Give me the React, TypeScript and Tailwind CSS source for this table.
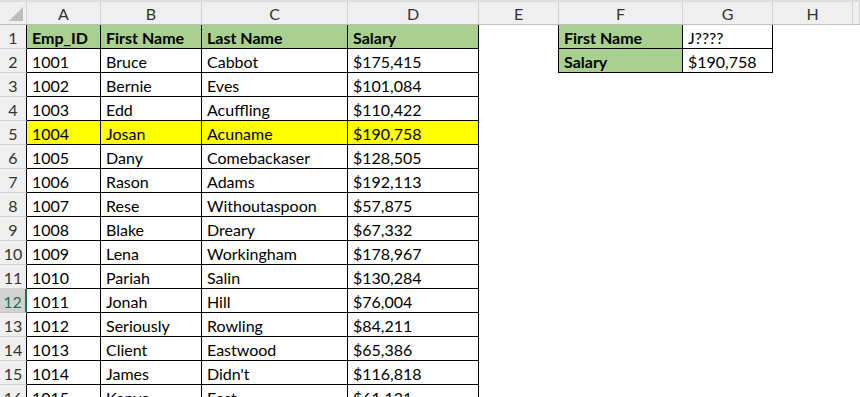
import React from 'react';

const cols = ['A', 'B', 'C', 'D', 'E', 'F', 'G', 'H', ''];

const employees: [string, string, string, string][] = [
  ['1001', 'Bruce', 'Cabbot', '$175,415'],
  ['1002', 'Bernie', 'Eves', '$101,084'],
  ['1003', 'Edd', 'Acuffling', '$110,422'],
  ['1004', 'Josan', 'Acuname', '$190,758'],
  ['1005', 'Dany', 'Comebackaser', '$128,505'],
  ['1006', 'Rason', 'Adams', '$192,113'],
  ['1007', 'Rese', 'Withoutaspoon', '$57,875'],
  ['1008', 'Blake', 'Dreary', '$67,332'],
  ['1009', 'Lena', 'Workingham', '$178,967'],
  ['1010', 'Pariah', 'Salin', '$130,284'],
  ['1011', 'Jonah', 'Hill', '$76,004'],
  ['1012', 'Seriously', 'Rowling', '$84,211'],
  ['1013', 'Client', 'Eastwood', '$65,386'],
  ['1014', 'James', "Didn't", '$116,818'],
  ['1015', 'Kanye', 'East', '$61,131'],
];

const lookup: [string, string][] = [
  ['First Name', 'J????'],
  ['Salary', '$190,758'],
];

const cell = 'flex items-center pt-[3px] px-[5px] whitespace-nowrap overflow-hidden';

export default function App() {
  const rows = [['Emp_ID', 'First Name', 'Last Name', 'Salary'], ...employees];

  return (
    <div
      className="w-[860px] h-[397px] overflow-hidden bg-white text-[16px] text-black"
      style={{ fontFamily: 'Lato, "Open Sans", sans-serif' }}
    >
      <div className="grid grid-cols-[27px_74px_101px_146px_131px_80px_124px_90px_80px_1fr] grid-rows-[25px_repeat(16,24px)]">
        {/* corner */}
        <div className="relative bg-[#efefef] border-t-2 border-t-[#dcdcdc] border-r border-r-[#d4d4d4] border-b border-b-[#bdbdbd]">
          <div className="absolute right-[3px] bottom-[3px] w-0 h-0 border-l-[14px] border-l-transparent border-b-[14px] border-b-[#bdbdbd]" />
        </div>
        {cols.map((c, i) => (
          <div
            key={i}
            className="flex items-center justify-center pt-[1px] bg-[#efefef] border-t-2 border-t-[#dcdcdc] border-r border-r-[#d4d4d4] border-b border-b-[#bdbdbd] text-[16px] text-[#333]"
          >
            {c}
          </div>
        ))}

        {rows.map((r, i) => {
          const n = i + 1;
          const selected = n === 12;
          const isHead = n === 1;
          const isHit = n === 5;
          const bg = isHead ? 'bg-[#a9d08e] font-bold' : isHit ? 'bg-[#ffff00]' : 'bg-white';
          const lk = lookup[i];
          return (
            <React.Fragment key={n}>
              <div
                className={
                  selected
                    ? 'flex items-center justify-center pt-[3px] bg-[#d2d2d2] text-[#217346] border-b border-b-[#c6c6c6] border-r-2 border-r-[#217346] text-[16px]'
                    : 'flex items-center justify-center pt-[3px] bg-[#efefef] text-[#333] border-b border-b-[#d4d4d4] border-r border-r-black text-[16px]'
                }
              >
                {n}
              </div>
              {r.map((v, j) => (
                <div key={j} className={`${cell} ${bg} border-r border-b border-black`}>
                  {v}
                </div>
              ))}
              <div className={lk ? 'border-r border-black' : ''} />
              {lk ? (
                <>
                  <div className={`${cell} bg-[#a9d08e] font-bold border-r border-b border-black`}>{lk[0]}</div>
                  <div className={`${cell} bg-white border-r border-b border-black`}>{lk[1]}</div>
                </>
              ) : (
                <>
                  <div />
                  <div />
                </>
              )}
              <div />
              <div />
            </React.Fragment>
          );
        })}
      </div>
    </div>
  );
}
